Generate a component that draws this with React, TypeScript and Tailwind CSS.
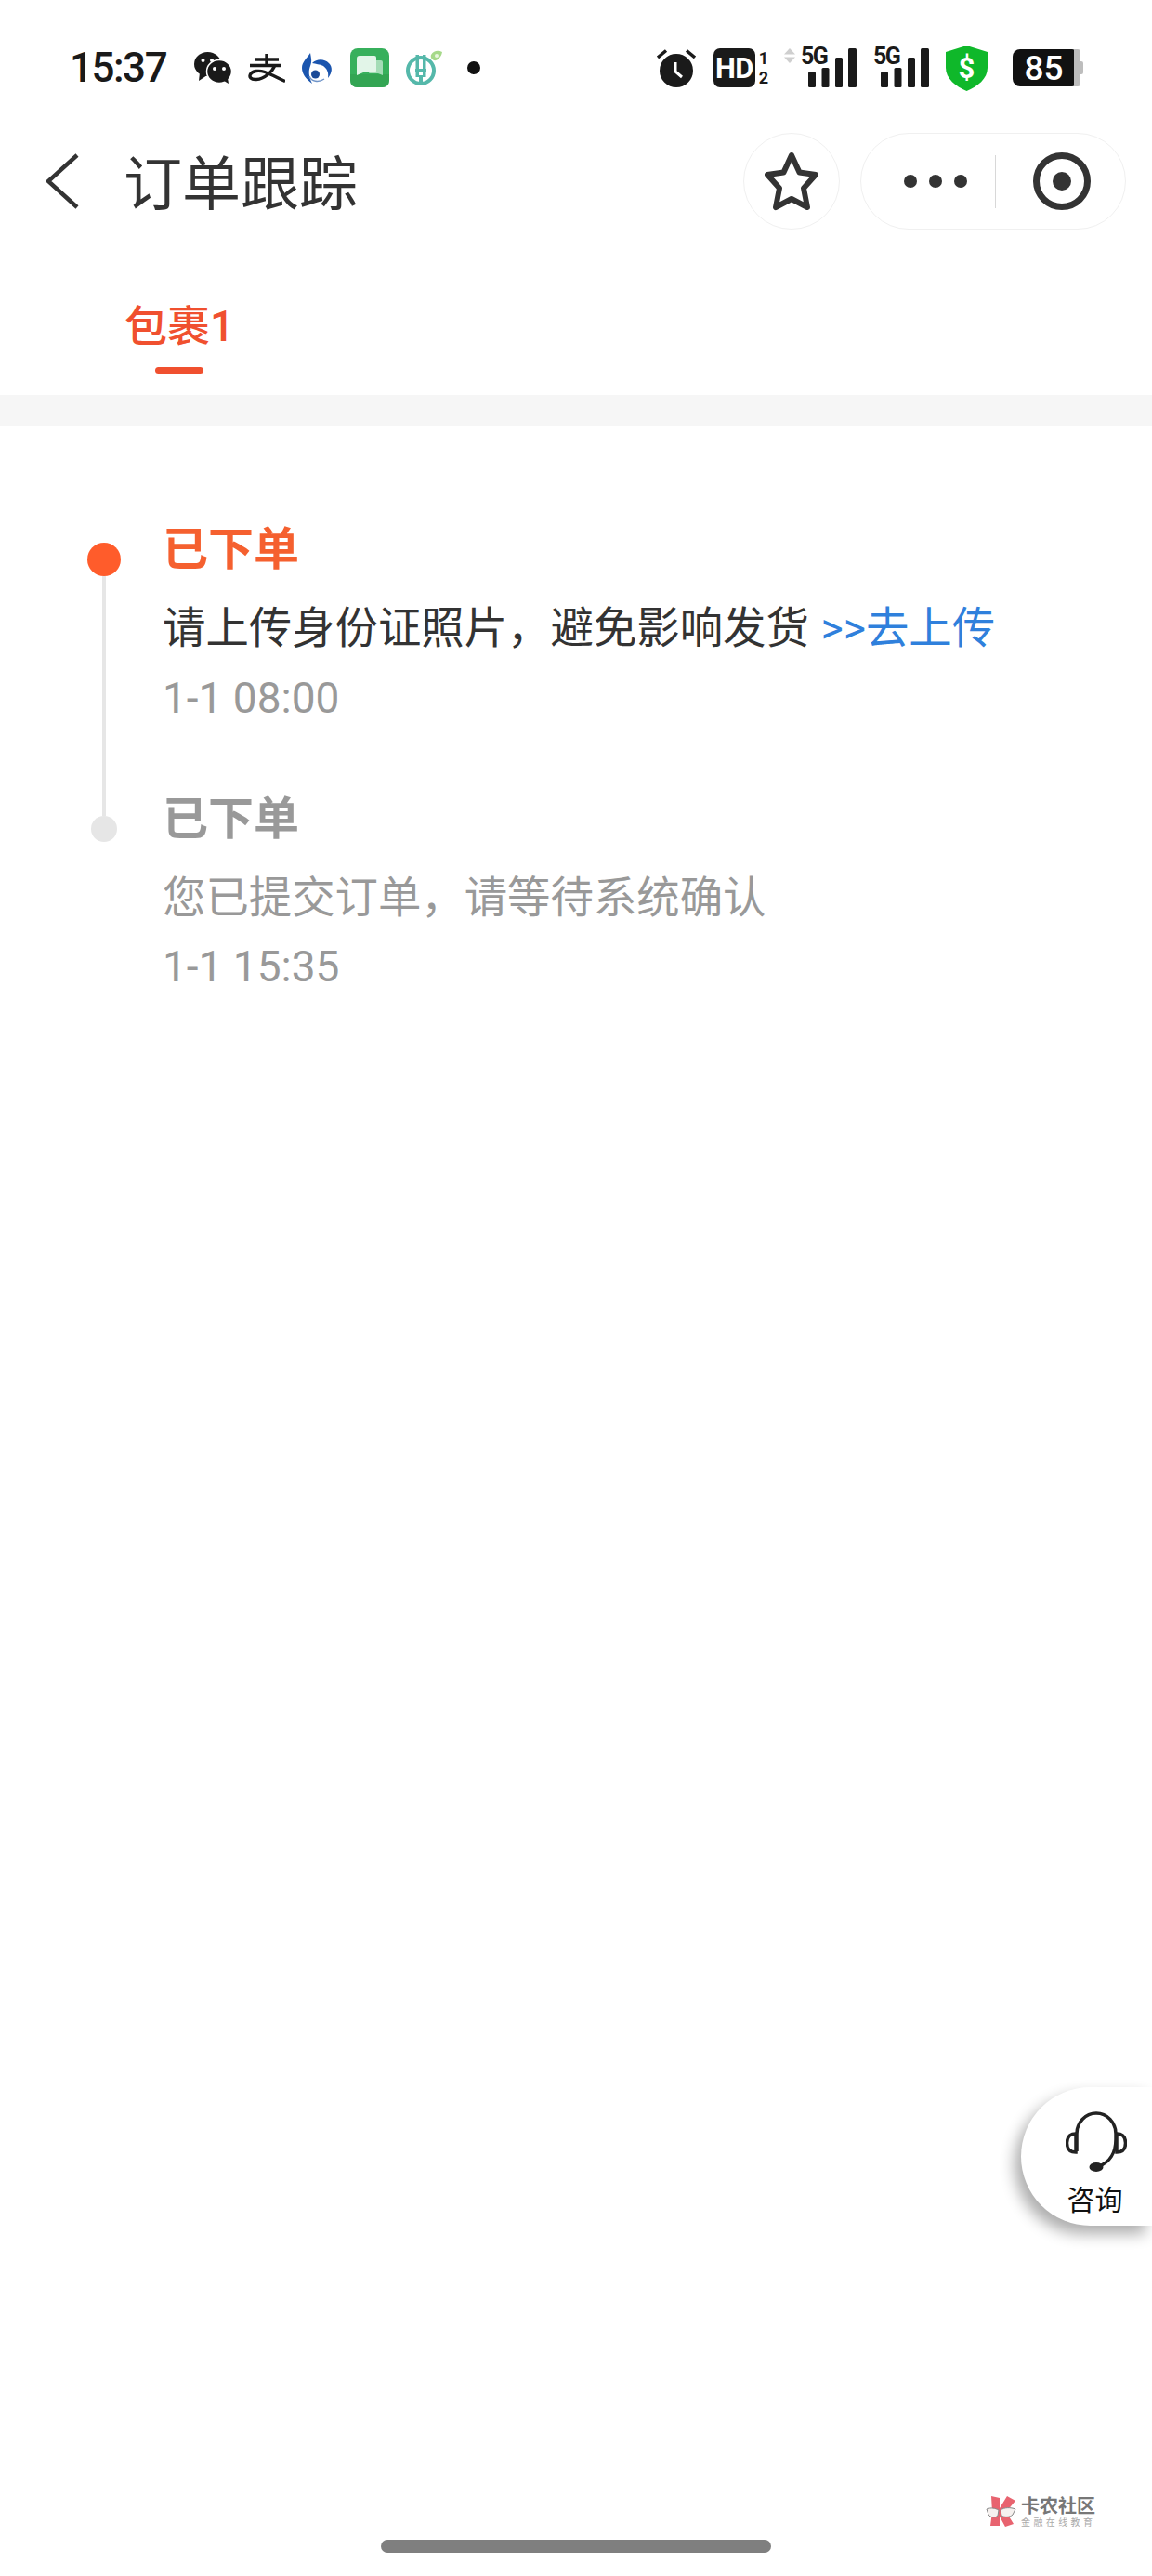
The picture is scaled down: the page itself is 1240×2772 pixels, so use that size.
const sans = "font-['Roboto','Noto_Sans_CJK_SC',sans-serif]";

function WeChat() {
  return (
    <svg width="40" height="34" viewBox="0 0 40 34" className="ml-[29px] shrink-0">
      <ellipse cx="14.5" cy="13" rx="14.5" ry="13" fill="#1a1a1a" />
      <path d="M6 22 L5 31 L14 25 Z" fill="#1a1a1a" />
      <ellipse cx="27" cy="21" rx="13.5" ry="12.5" fill="#1a1a1a" stroke="#fff" strokeWidth="1.5" />
      <path d="M32 31 L37 34 L36 28 Z" fill="#1a1a1a" />
      <circle cx="9.5" cy="9" r="2" fill="#fff" />
      <circle cx="19" cy="9" r="2" fill="#fff" />
      <circle cx="22" cy="18" r="2" fill="#fff" />
      <circle cx="32" cy="18" r="2" fill="#fff" />
    </svg>
  );
}

function Alipay() {
  return (
    <svg width="40" height="31" viewBox="0 0 40 31" className="ml-[18px] mr-[18px] shrink-0">
      <path
        d="M20 0 V12 M7 6 H33 M2 12.5 H35 M29 12.5 C26 19 18 27 9 27.5 C3 28 1 25 2.5 22 C4.5 18 12 17.5 18 19.5 C25 22 32 26 40 29.5"
        fill="none"
        stroke="#1a1a1a"
        strokeWidth="3.4"
      />
    </svg>
  );
}

function BLogo() {
  return (
    <svg width="33" height="33" viewBox="0 0 33 33" className="shrink-0">
      <path d="M9 0 C10 6 11 9 9 14 C7 19 7 25 11 33 C4 28 0 22 0 16 C0 10 5 6 9 0 Z" fill="#1b55ae" />
      <path d="M11 11 C16 6 24 6 29 11 C33 15 33 21 28 27 C29 21 27 17 23 14 C19 12 15 12 11 11 Z" fill="#1b55ae" />
      <circle cx="14.5" cy="23" r="4.5" fill="#1b4a97" />
      <path d="M8 25 C10 31 18 32 24 28" fill="none" stroke="#6f94c8" strokeWidth="1.5" />
    </svg>
  );
}

function ChatApp() {
  return (
    <svg width="42" height="42" viewBox="0 0 42 42" className="shrink-0">
      <rect width="42" height="42" rx="8" fill="#37b05c" />
      <path d="M0 28 H42 V34 Q42 42 34 42 H8 Q0 42 0 34 Z" fill="#33a553" />
      <path d="M26 13 H33 Q35 13 35 15 V29 L30 27 H20 Z" fill="#a4dcb6" />
      <path d="M10 8 H26 Q28 8 28 10 V24 Q28 26 26 26 H14 L7 29 V11 Q7 8 10 8 Z" fill="#e2f5e8" />
    </svg>
  );
}

function AbcLogo() {
  return (
    <svg width="40" height="38" viewBox="0 0 40 38" className="shrink-0">
      <circle cx="16" cy="22" r="14" fill="none" stroke="#55b8aa" strokeWidth="4" />
      <rect x="10.5" y="5" width="3.5" height="24" fill="#55b8aa" />
      <rect x="18" y="5" width="3.5" height="24" fill="#55b8aa" />
      <rect x="10" y="20" width="12" height="3" fill="#55b8aa" />
      <rect x="14" y="27" width="4" height="9" fill="#55b8aa" />
      <path d="M27 5 C30 0 35 0 39 2 C38 8 33 12 30 11 C28 10 26 8 27 5 Z" fill="#a6d98a" />
      <circle cx="33" cy="6" r="2" fill="#e9f6df" />
    </svg>
  );
}

function Alarm() {
  return (
    <svg width="42" height="42" viewBox="0 0 42 42" className="shrink-0">
      <circle cx="21" cy="24" r="18" fill="#1a1a1a" />
      <path d="M1 10 L10 2.5" stroke="#1a1a1a" strokeWidth="3.5" />
      <path d="M41 10 L32 2.5" stroke="#1a1a1a" strokeWidth="3.5" />
      <path d="M20 15 V25 L27 31" fill="none" stroke="#fff" strokeWidth="3" />
    </svg>
  );
}

function Signal({ arrows }: { arrows?: boolean }) {
  return (
    <div className="flex items-start shrink-0">
      {arrows && (
        <svg width="12" height="16" viewBox="0 0 12 16" className="mr-[6px]">
          <path d="M6 0 L12 6.5 H0 Z" fill="#cfcfcf" />
          <path d="M6 16 L12 9.5 H0 Z" fill="#cfcfcf" />
        </svg>
      )}
      <div className="relative w-[60px] h-[42px]">
        <span className="absolute left-0 top-[-4px] text-[25px] leading-[26px] font-bold tracking-[-1.5px] text-[#1a1a1a] font-['Roboto',sans-serif]">
          5G
        </span>
        <svg width="60" height="42" viewBox="0 0 60 42" className="absolute left-0 top-0">
          <rect x="8" y="25" width="8" height="17" rx="1.5" fill="#1a1a1a" />
          <rect x="22.5" y="21" width="8" height="21" rx="1.5" fill="#1a1a1a" />
          <rect x="37" y="10" width="8" height="32" rx="1.5" fill="#1a1a1a" />
          <rect x="51" y="0" width="9" height="42" rx="1.5" fill="#1a1a1a" />
        </svg>
      </div>
    </div>
  );
}

function StatusBar() {
  return (
    <div className="mt-[23px] h-[100px] flex items-center pl-[75px] pr-[74px]">
      <span className="text-[44px] font-medium leading-none tracking-[-1.5px] text-[#1a1a1a] font-['Roboto',sans-serif] w-[105px] shrink-0">
        15:37
      </span>
      <WeChat />
      <Alipay />
      <BLogo />
      <div className="w-[19px] shrink-0" />
      <ChatApp />
      <div className="w-[18px] shrink-0" />
      <AbcLogo />
      <div className="ml-[26px] size-[14px] rounded-full bg-[#111] shrink-0" />
      <div className="flex-1" />
      <Alarm />
      <div className="ml-[19px] w-[45px] h-[42px] rounded-[7px] bg-[#1a1a1a] flex items-center justify-center shrink-0">
        <span className="text-[31px] font-bold leading-none tracking-[-0.5px] text-white font-['Roboto',sans-serif]">HD</span>
      </div>
      <div className="ml-[4px] w-[10px] flex flex-col items-center text-[18px] leading-[21px] font-bold text-[#1a1a1a] font-['Roboto',sans-serif] shrink-0">
        <span>1</span>
        <span>2</span>
      </div>
      <div className="ml-[17px]">
        <Signal arrows />
      </div>
      <div className="ml-[18px]">
        <Signal />
      </div>
      <div className="relative ml-[18px] w-[45px] h-[49px] shrink-0 flex items-center justify-center">
        <svg width="45" height="49" viewBox="0 0 45 49" className="absolute inset-0">
          <path d="M22.5 0 L45 7 V24 C45 36 34 44 22.5 49 C11 44 0 36 0 24 V7 Z" fill="#0fb82a" />
        </svg>
        <span className="relative text-[31px] font-bold leading-none text-white font-['Roboto',sans-serif]">$</span>
      </div>
      <div className="ml-[27px] flex items-center shrink-0">
        <div className="w-[67px] h-[40px] rounded-l-[8px] rounded-r-[3px] bg-[#111] flex items-center justify-center">
          <span className="text-[37px] font-medium leading-none text-white font-['Roboto',sans-serif]">85</span>
        </div>
        <div className="w-[7px] h-[40px] bg-[#bdbdbd] rounded-r-[3px] -ml-[1px]" />
        <div className="w-[3px] h-[14px] bg-[#bdbdbd] rounded-r-[2px]" />
      </div>
    </div>
  );
}

function NavBar() {
  return (
    <div className="mt-[20px] h-[104px] flex items-center pl-[49px] pr-[28px]">
      <svg width="36" height="60" viewBox="0 0 36 60" className="shrink-0">
        <path d="M34 2 L3 30 L34 58" fill="none" stroke="#333" strokeWidth="4.5" />
      </svg>
      <span className="ml-[48px] -mt-[5px] text-[63px] leading-[80px] text-[#333] font-['Noto_Sans_CJK_SC',sans-serif]">
        订单跟踪
      </span>
      <div className="flex-1" />
      <div className="size-[104px] rounded-full border border-[#f0f0f0] flex items-center justify-center shrink-0">
        <svg width="58" height="64" viewBox="0 0 58 64">
          <path
            d="M29 4 L37.5 22.5 L55 25 L42 39.5 L46 60 L29 51 L12 60 L16 39.5 L3 25 L20.5 22.5 Z"
            fill="none"
            stroke="#333"
            strokeWidth="6"
            strokeLinejoin="round"
          />
        </svg>
      </div>
      <div className="ml-[22px] w-[286px] h-[104px] rounded-full border border-[#f0f0f0] flex items-center shrink-0">
        <div className="ml-[46px] flex gap-[13px] shrink-0">
          <div className="size-[14px] rounded-full bg-[#333]" />
          <div className="size-[14px] rounded-full bg-[#333]" />
          <div className="size-[14px] rounded-full bg-[#333]" />
        </div>
        <div className="ml-[30px] w-px h-[57px] bg-[#d8d8d8]" />
        <div className="ml-[40px] size-[62px] rounded-full border-[7px] border-[#333] flex items-center justify-center shrink-0">
          <div className="size-[20px] rounded-full bg-[#333]" />
        </div>
      </div>
    </div>
  );
}

function Tabs() {
  return (
    <div className="pl-[134px] pt-[76px] pb-[23px]">
      <div className={`text-[46px] leading-[56px] font-medium text-[#f0502f] ${sans}`}>包裹1</div>
      <div className="mt-[16px] ml-[33px] w-[52px] h-[7px] rounded-full bg-[#f0502f]" />
    </div>
  );
}

function Timeline() {
  return (
    <div className={`pt-[104px] ${sans}`}>
      <div className="flex pb-[71px]">
        <div className="ml-[92px] mr-[43px] w-[40px] flex flex-col items-center shrink-0">
          <div className="mt-[22px] size-[36px] rounded-full bg-[#ff5c2b] shrink-0" />
          <div className="flex-1 w-[4px] bg-[#e6e6e6] -mb-[71px]" />
        </div>
        <div>
          <div className="text-[49px] leading-[60px] font-bold text-[#f5602f]">已下单</div>
          <div className="mt-[24px] text-[46.4px] leading-[60px] text-[#333]">
            请上传身份证照片，避免影响发货 <span className="ml-[1px] text-[#2f80dc]">&gt;&gt;去上传</span>
          </div>
          <div className="mt-[15px] text-[46px] leading-[60px] text-[#999]">1-1 08:00</div>
        </div>
      </div>
      <div className="flex">
        <div className="ml-[92px] mr-[43px] w-[40px] flex flex-col items-center shrink-0">
          <div className="h-[26px] w-[4px] bg-[#e6e6e6]" />
          <div className="size-[28px] rounded-full bg-[#e6e6e6]" />
        </div>
        <div>
          <div className="text-[49px] leading-[60px] font-bold text-[#999]">已下单</div>
          <div className="mt-[24px] text-[46.4px] leading-[60px] text-[#999]">您已提交订单，请等待系统确认</div>
          <div className="mt-[14px] text-[46px] leading-[60px] text-[#999]">1-1 15:35</div>
        </div>
      </div>
    </div>
  );
}

function Consult() {
  return (
    <div className="absolute left-[1099px] right-0 top-[2246px] h-[149px] rounded-l-[75px] bg-white shadow-[-7px_9px_16px_rgba(0,0,0,0.32)] flex flex-col items-center pl-[20px] pr-[2px] pt-[26px]">
      <svg width="66" height="65" viewBox="0 0 66 65" className="shrink-0 ml-[2px]">
        <path d="M12 43 V24 A21 22 0 0 1 54 24 V30 C54 45 47 55 36 59" fill="none" stroke="#222" strokeWidth="3.5" />
        <path d="M11 24 C4 24 1.5 28 1.5 34 C1.5 40 4 44 11 44 Z" fill="none" stroke="#222" strokeWidth="3.5" />
        <path d="M55 24 C62 24 64.5 28 64.5 34 C64.5 40 62 44 55 44 Z" fill="none" stroke="#222" strokeWidth="3.5" />
        <ellipse cx="33" cy="60" rx="7.5" ry="5" fill="#222" />
      </svg>
      <span className="mt-[10px] text-[30px] leading-[36px] text-[#111] font-['Noto_Sans_CJK_SC',sans-serif]">咨询</span>
    </div>
  );
}

function Watermark() {
  return (
    <div className="absolute left-[1061px] top-[2685px] flex items-center gap-[5px]">
      <svg width="33" height="35" viewBox="0 0 33 35" className="shrink-0">
        <path d="M6 1 L15 3 L15 14 L23 1 L32 6 L22 18 L30 31 L21 34 L15 23 L15 33 L5 33 L7 18 Z" fill="#e8636f" />
        <path d="M1 15 C6 13 10 14 14 16 L13 22 C10 25 5 24 3 21 Z" fill="#f6f1ef" stroke="#888" strokeWidth="1" />
        <path d="M16 16 C20 13 27 13 32 15 L29 21 C26 24 20 24 17 22 Z" fill="#f6f1ef" stroke="#888" strokeWidth="1" />
      </svg>
      <div className="font-['Noto_Sans_CJK_SC',sans-serif]">
        <div className="text-[20px] leading-[20px] font-bold text-[#777] whitespace-nowrap">卡农社区</div>
        <div className="mt-[2px] text-[10px] leading-[12px] tracking-[3.4px] text-[#aaa] whitespace-nowrap">金融在线教育</div>
      </div>
    </div>
  );
}

export default function App() {
  return (
    <div className="relative w-[1240px] h-[2772px] bg-white overflow-hidden flex flex-col">
      <StatusBar />
      <NavBar />
      <Tabs />
      <div className="h-[33px] bg-[#f6f6f6] shrink-0" />
      <Timeline />
      <div className="mt-auto mb-[25px] mx-auto w-[420px] h-[14px] rounded-full bg-[#7f7f7f] shrink-0" />
      <Consult />
      <Watermark />
    </div>
  );
}
